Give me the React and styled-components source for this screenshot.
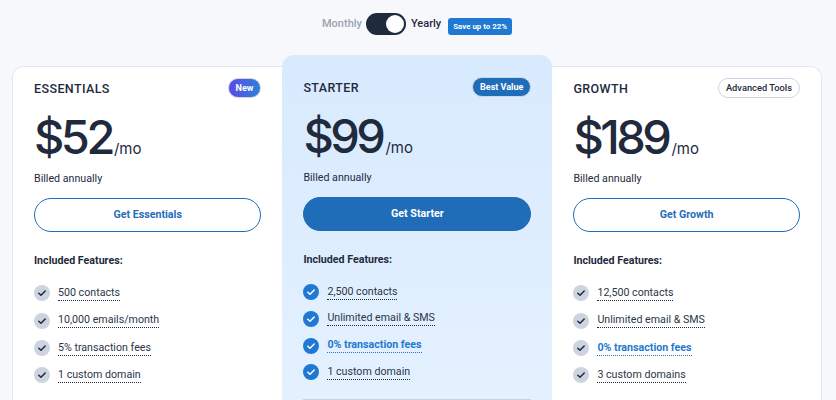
import React from 'react';
import styled, { createGlobalStyle } from 'styled-components';

const GlobalStyle = createGlobalStyle`
  html, body {
    margin: 0;
    padding: 0;
    background: #f6f8fb;
    overflow: hidden;
  }
  * { box-sizing: border-box; }
`;

const Page = styled.div`
  width: 836px;
  height: 400px;
  overflow: hidden;
  font-family: Roboto, "Liberation Sans", sans-serif;
  color: #1f2a3d;
`;

const Toggle = styled.div`
  height: 66px;
  padding: 13px 0 0 322px;
  display: flex;
  align-items: flex-start;
`;

const ToggleLabel = styled.span`
  font-size: 11px;
  font-weight: 500;
  line-height: 22px;
  color: ${(p) => (p.$active ? '#1f2a3d' : '#9aa3b2')};
`;

const Switch = styled.span`
  width: 40px;
  height: 22px;
  margin: 0 5px 0 4px;
  padding: 2px;
  border-radius: 11px;
  background: #1f2a3d;
  display: flex;
  justify-content: flex-end;
`;

const Knob = styled.span`
  width: 18px;
  height: 18px;
  border-radius: 50%;
  background: #fff;
`;

const Save = styled.span`
  margin: 5px 0 0 7px;
  height: 17px;
  padding: 0 5px;
  border-radius: 3px;
  background: #1f78d1;
  color: #fff;
  font-size: 7.9px;
  font-weight: 700;
  line-height: 17px;
`;

const Plans = styled.div`
  margin: 0 14px 0 12px;
  height: 400px;
  display: grid;
  grid-template-columns: 269.4px 270px 268.6px;
  background: #fff;
  border: 1px solid #e2e8f2;
  border-bottom: 0;
  border-radius: 12px 12px 0 0;
`;

const Plan = styled.section`
  padding: ${(p) => (p.$featured ? '22px 21px 0' : '11px 21px 0')};
  ${(p) => p.$featured && `
    margin-top: -12px;
    border-radius: 12px 12px 0 0;
    background: linear-gradient(180deg, #d8eafe 0%, #e6f2ff 100%);
  `}
`;

const PlanHead = styled.div`
  height: 20px;
  display: flex;
  align-items: center;
  justify-content: space-between;
`;

const PlanName = styled.h2`
  margin: 0;
  font-size: 12.5px;
  font-weight: 500;
  letter-spacing: 0.4px;
  color: #1f2a3d;
`;

const Badge = styled.span`
  height: 20px;
  padding: 0 7px;
  border-radius: 10px;
  border: 1px solid #cfd6e2;
  font-size: ${(p) => (p.$kind === 'outline' ? 9.3 : 9)}px;
  font-weight: ${(p) => (p.$kind === 'outline' ? 500 : 700)};
  line-height: 18px;
  color: ${(p) => (p.$kind === 'outline' ? '#1f2a3d' : '#fff')};
  background: ${(p) => {
    if (p.$kind === 'outline') return '#fff';
    if (p.$kind === 'gradient') return 'linear-gradient(90deg, #5b4be8, #2f7fd8)';
    return '#1f6db8';
  }};
`;

const PriceRow = styled.div`
  margin-top: 10px;
  height: 58px;
  display: flex;
  align-items: baseline;
`;

const Amount = styled.span`
  font-family: Inter, Roboto, sans-serif;
  font-size: 47px;
  font-weight: 500;
  line-height: 58px;
  letter-spacing: -3.5px;
  color: #1f2a3d;
`;

const Per = styled.span`
  font-family: Inter, Roboto, sans-serif;
  font-size: 15px;
  margin-left: ${(p) => p.$gap}px;
  color: #1f2a3d;
`;

const Billed = styled.div`
  margin-top: 5px;
  height: 16px;
  font-size: 10.67px;
  line-height: 16px;
  color: #1f2a3d;
`;

const Cta = styled.button`
  display: block;
  width: 100%;
  height: 34px;
  margin-top: 11px;
  padding: 0 0 2px;
  border-radius: 17px;
  border: 1px solid #1f6db8;
  background: ${(p) => (p.$solid ? '#1f6db8' : '#fff')};
  color: ${(p) => (p.$solid ? '#fff' : '#1f6db8')};
  font-family: inherit;
  font-size: 10.67px;
  font-weight: 700;
`;

const FeatureTitle = styled.div`
  margin-top: 22px;
  font-size: 10.67px;
  font-weight: 700;
  line-height: 14px;
  color: #1f2a3d;
`;

const Features = styled.ul`
  list-style: none;
  margin: 17.3px 0 0;
  padding: 0;
  display: flex;
  flex-direction: column;
  gap: ${(p) => (p.$featured ? 10.7 : 11.4)}px;
`;

const Feature = styled.li`
  height: 16px;
  display: flex;
  align-items: center;
  gap: 8px;
`;

const Check = styled.span`
  width: 16px;
  height: 16px;
  flex: none;
  border-radius: 50%;
  display: flex;
  align-items: center;
  justify-content: center;
  background: ${(p) => (p.$featured ? '#1f78d1' : '#cdd4df')};
  color: ${(p) => (p.$featured ? '#fff' : '#1f2a3d')};
`;

const FeatureText = styled.span`
  font-size: 10.67px;
  line-height: 14px;
  border-bottom: 1px dotted ${(p) => (p.$highlight ? '#1f78d1' : '#1f2a3d')};
  color: ${(p) => (p.$highlight ? '#1f78d1' : '#2b3648')};
  font-weight: ${(p) => (p.$highlight ? 700 : 400)};
`;

const BottomRule = styled.div`
  margin-top: 19px;
  height: 2px;
  background: #c9d3df;
`;

const CheckIcon = () => (
  <svg width="10" height="10" viewBox="0 0 10 10" fill="none" stroke="currentColor" strokeWidth="1.5" strokeLinecap="round" strokeLinejoin="round">
    <path d="M1.8 5.2 4 7.3 8.2 3" />
  </svg>
);

const plans = [
  {
    name: 'ESSENTIALS',
    badge: 'New',
    badgeKind: 'gradient',
    price: '$52',
    gap: 2,
    cta: 'Get Essentials',
    features: ['500 contacts', '10,000 emails/month', '5% transaction fees', '1 custom domain'],
  },
  {
    name: 'STARTER',
    badge: 'Best Value',
    badgeKind: 'solid',
    price: '$99',
    gap: 3,
    cta: 'Get Starter',
    featured: true,
    features: ['2,500 contacts', 'Unlimited email & SMS', '0% transaction fees', '1 custom domain'],
  },
  {
    name: 'GROWTH',
    badge: 'Advanced Tools',
    badgeKind: 'outline',
    price: '$189',
    gap: 3,
    cta: 'Get Growth',
    features: ['12,500 contacts', 'Unlimited email & SMS', '0% transaction fees', '3 custom domains'],
  },
];

export default function App() {
  return (
    <Page>
      <GlobalStyle />
      <Toggle>
        <ToggleLabel>Monthly</ToggleLabel>
        <Switch><Knob /></Switch>
        <ToggleLabel $active>Yearly</ToggleLabel>
        <Save>Save up to 22%</Save>
      </Toggle>
      <Plans>
        {plans.map((plan) => (
          <Plan key={plan.name} $featured={plan.featured}>
            <PlanHead>
              <PlanName>{plan.name}</PlanName>
              <Badge $kind={plan.badgeKind}>{plan.badge}</Badge>
            </PlanHead>
            <PriceRow>
              <Amount>{plan.price}</Amount>
              <Per $gap={plan.gap}>/mo</Per>
            </PriceRow>
            <Billed>Billed annually</Billed>
            <Cta $solid={plan.featured}>{plan.cta}</Cta>
            <FeatureTitle>Included Features:</FeatureTitle>
            <Features $featured={plan.featured}>
              {plan.features.map((feature) => (
                <Feature key={feature}>
                  <Check $featured={plan.featured}><CheckIcon /></Check>
                  <FeatureText $highlight={feature.startsWith('0%')}>{feature}</FeatureText>
                </Feature>
              ))}
            </Features>
            {plan.featured && <BottomRule />}
          </Plan>
        ))}
      </Plans>
    </Page>
  );
}
